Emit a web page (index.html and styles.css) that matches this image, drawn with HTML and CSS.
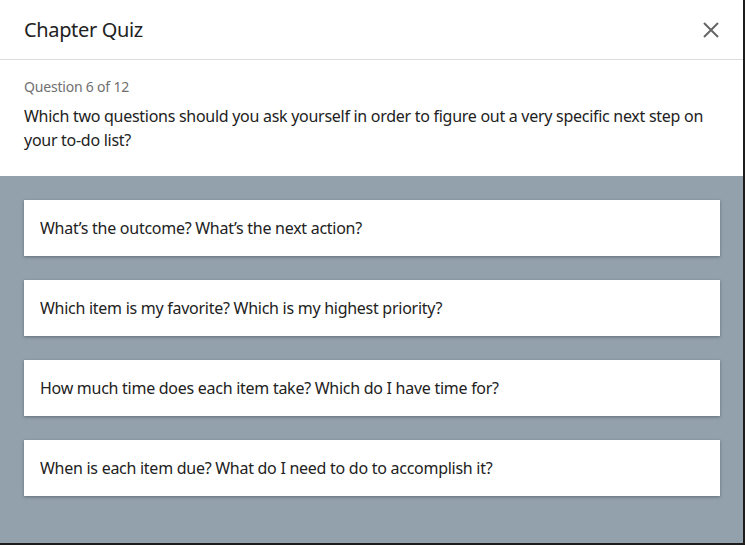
FILE: index.html
```html
<!DOCTYPE html>
<html lang="en">
<head>
<meta charset="utf-8">
<title>Chapter Quiz</title>
<link rel="stylesheet" href="styles.css">
</head>
<body>
<div class="modal">
  <header class="modal-header">
    <h1 class="modal-title">Chapter Quiz</h1>
    <button class="close" aria-label="Close">
      <svg width="16" height="16" viewBox="0 0 16 16"><path d="M1 1 L15 15 M15 1 L1 15" stroke="#666" stroke-width="2" fill="none"/></svg>
    </button>
  </header>
  <section class="question">
    <div class="counter">Question 6 of 12</div>
    <p class="prompt">Which two questions should you ask yourself in order to figure out a very specific next step on your to-do list?</p>
  </section>
  <section class="answers">
    <div class="answer">What’s the outcome? What’s the next action?</div>
    <div class="answer">Which item is my favorite? Which is my highest priority?</div>
    <div class="answer">How much time does each item take? Which do I have time for?</div>
    <div class="answer">When is each item due? What do I need to do to accomplish it?</div>
  </section>
</div>
</body>
</html>
```

FILE: styles.css
```css
html, body {
  margin: 0;
  padding: 0;
  background: #1c1c1c;
  height: 100%;
}
.modal {
  width: 743px;
  height: 543px;
  background: #fff;
  font-family: "Noto Sans", "Open Sans", sans-serif;
  color: #222;
  display: flex;
  flex-direction: column;
  overflow: hidden;
}
.modal-header {
  height: 60px;
  box-sizing: border-box;
  border-bottom: 1px solid #dcdcdc;
  display: flex;
  align-items: center;
  justify-content: space-between;
  padding: 0 22px 0 24px;
}
.modal-title {
  margin: 0;
  font-size: 20px;
  font-weight: 400;
  letter-spacing: -0.35px;
  color: #222;
}
.close {
  border: 0;
  background: none;
  padding: 0;
  width: 20px;
  height: 20px;
  display: flex;
  align-items: center;
  justify-content: center;
}
.question {
  padding: 17px 24px 24px;
}
.counter {
  font-size: 14px;
  color: #707070;
  line-height: 20px;
  letter-spacing: -0.2px;
}
.prompt {
  margin: 7px 0 0;
  font-size: 16px;
  line-height: 24px;
  letter-spacing: -0.28px;
  color: #222;
}
.answers {
  flex: 1;
  background: #93a1ac;
  padding: 24px 23px 0 24px;
  display: flex;
  flex-direction: column;
  gap: 24px;
}
.answer {
  height: 56px;
  background: #fff;
  display: flex;
  align-items: center;
  padding: 0 16px;
  font-size: 16px;
  letter-spacing: -0.27px;
  color: #222;
  box-shadow: 0 1px 3px rgba(40, 50, 60, 0.45);
}
```
